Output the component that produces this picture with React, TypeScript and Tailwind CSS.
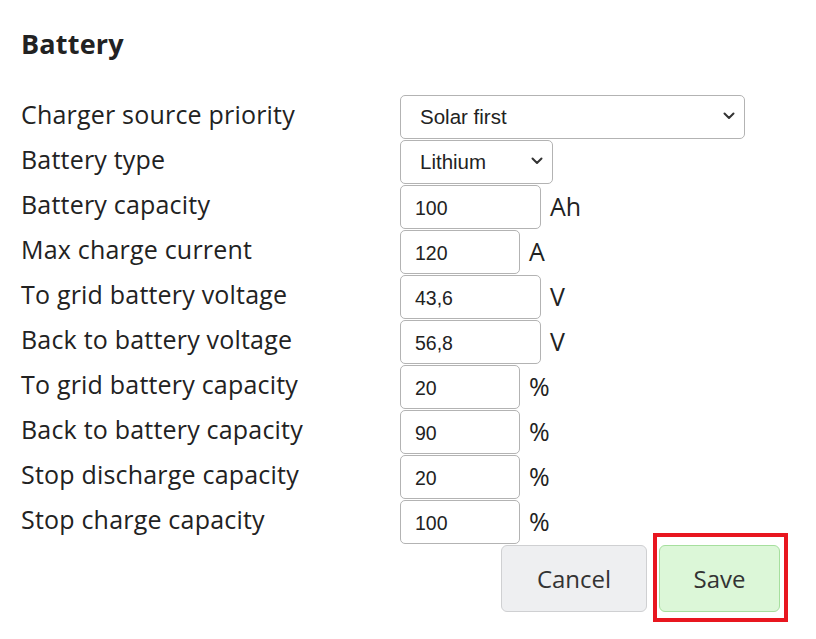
import React from "react";

const rows = [
  { label: "Charger source priority", kind: "select", value: "Solar first", width: "w-[345px]" },
  { label: "Battery type", kind: "select", value: "Lithium", width: "w-[153px]" },
  { label: "Battery capacity", kind: "input", value: "100", unit: "Ah", width: "w-[141px]" },
  { label: "Max charge current", kind: "input", value: "120", unit: "A", width: "w-[120px]" },
  { label: "To grid battery voltage", kind: "input", value: "43,6", unit: "V", width: "w-[141px]" },
  { label: "Back to battery voltage", kind: "input", value: "56,8", unit: "V", width: "w-[141px]" },
  { label: "To grid battery capacity", kind: "input", value: "20", unit: "%", width: "w-[120px]" },
  { label: "Back to battery capacity", kind: "input", value: "90", unit: "%", width: "w-[120px]" },
  { label: "Stop discharge capacity", kind: "input", value: "20", unit: "%", width: "w-[120px]" },
  { label: "Stop charge capacity", kind: "input", value: "100", unit: "%", width: "w-[120px]" },
];

const labelFont = "font-['Open_Sans',sans-serif]";

export default function App() {
  return (
    <main className={`min-h-screen bg-white text-[#222] ${labelFont}`}>
      <div className="pl-[21px] pt-[24px]">
        {/* Title */}
        <h2 className="text-[27px] font-bold leading-[40px] tracking-[0.2px]">Battery</h2>

        {/* Form rows */}
        <div className="mt-[31px] flex flex-col">
          {rows.map((r) => (
            <div key={r.label} className="flex h-[45px] items-start">
              <label className="w-[379px] pt-[3px] text-[25px] leading-[32px] tracking-[0.2px]">{r.label}</label>
              {r.kind === "select" ? (
                <div className={`relative h-[44px] ${r.width}`}>
                  <select
                    defaultValue={r.value}
                    className="h-full w-full appearance-none rounded-[5px] border border-[#b3b3b3] bg-white pl-[19px] font-['Liberation_Sans',Arial,sans-serif] text-[20.5px] text-[#222]"
                  >
                    <option>{r.value}</option>
                  </select>
                  <svg
                    className="pointer-events-none absolute right-[10px] top-[17px]"
                    width="12"
                    height="8"
                    viewBox="0 0 12 8"
                    fill="none"
                    stroke="#333"
                    strokeWidth="2"
                    strokeLinecap="round"
                    strokeLinejoin="round"
                  >
                    <path d="M1.5 1.5l4.5 4.5 4.5-4.5" />
                  </svg>
                </div>
              ) : (
                <div className="flex items-start">
                  <input
                    defaultValue={r.value}
                    className={`h-[44px] ${r.width} rounded-[5px] border border-[#b3b3b3] bg-white pl-[14px] pt-[2px] font-['Liberation_Sans',Arial,sans-serif] text-[19.5px] text-[#222] outline-none`}
                  />
                  <span className="ml-[9px] pt-[5px] text-[25px] leading-[32px]">{r.unit}</span>
                </div>
              )}
            </div>
          ))}
        </div>

        {/* Actions */}
        <div className="flex w-[759px] justify-end gap-[12px]">
          <button className="h-[67px] w-[146px] rounded-[6px] border border-[#cfd0d2] bg-[#eeeff1] text-[24px] text-[#333]">
            Cancel
          </button>
          <div className="relative">
            <button className="h-[67px] w-[121px] rounded-[6px] border border-[#a6df9e] bg-[#dcf7d8] text-[24px] text-[#333]">
              Save
            </button>
            <span className="pointer-events-none absolute -top-[12px] -left-[6px] -right-[8px] -bottom-[10px] border-4 border-[#e8161f]" />
          </div>
        </div>
      </div>
    </main>
  );
}
